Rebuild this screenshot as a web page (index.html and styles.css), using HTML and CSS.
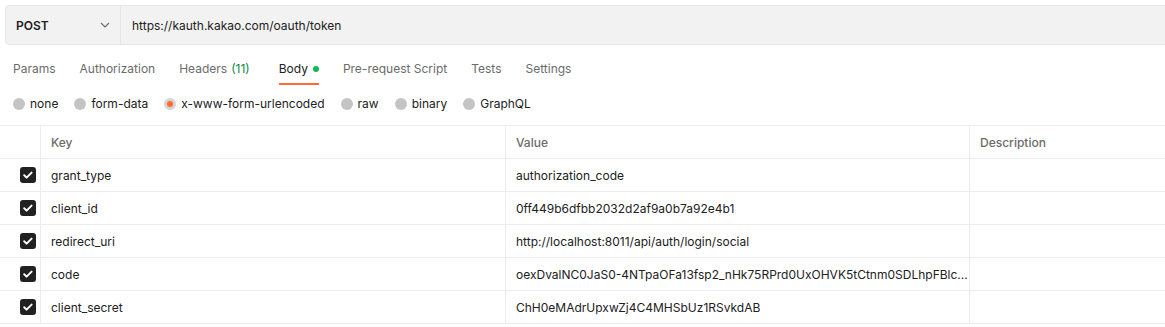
FILE: index.html
```html
<!DOCTYPE html>
<html lang="en">
<head>
    <meta charset="UTF-8">
    <title>POST https://kauth.kakao.com/oauth/token</title>
    <link rel="stylesheet" href="styles.css">
</head>
<body>
    <div class="url-bar">
        <div class="method">
            <span>POST</span>
            <svg class="chevron" width="10" height="6" viewBox="0 0 10 6"><path d="M1 1l4 4 4-4" fill="none" stroke="#6b6b6b" stroke-width="1.1"/></svg>
        </div>
        <div class="url">https://kauth.kakao.com/oauth/token</div>
    </div>

    <div class="tabs">
        <div class="tab">Params</div>
        <div class="tab">Authorization</div>
        <div class="tab headers">Headers <span class="count">(11)</span></div>
        <div class="tab active">Body <span class="dot"></span></div>
        <div class="tab">Pre-request Script</div>
        <div class="tab">Tests</div>
        <div class="tab">Settings</div>
    </div>

    <div class="body-types">
        <label class="radio"><span class="circle"></span>none</label>
        <label class="radio"><span class="circle"></span>form-data</label>
        <label class="radio"><span class="circle selected"></span>x-www-form-urlencoded</label>
        <label class="radio"><span class="circle"></span>raw</label>
        <label class="radio"><span class="circle"></span>binary</label>
        <label class="radio"><span class="circle"></span>GraphQL</label>
    </div>

    <div class="params">
        <div class="row head">
            <div class="cell check"></div>
            <div class="cell">Key</div>
            <div class="cell">Value</div>
            <div class="cell">Description</div>
        </div>
        <div class="row">
            <div class="cell check"><span class="box"></span></div>
            <div class="cell">grant_type</div>
            <div class="cell">authorization_code</div>
            <div class="cell"></div>
        </div>
        <div class="row">
            <div class="cell check"><span class="box"></span></div>
            <div class="cell">client_id</div>
            <div class="cell">0ff449b6dfbb2032d2af9a0b7a92e4b1</div>
            <div class="cell"></div>
        </div>
        <div class="row">
            <div class="cell check"><span class="box"></span></div>
            <div class="cell">redirect_uri</div>
            <div class="cell">http://localhost:8011/api/auth/login/social</div>
            <div class="cell"></div>
        </div>
        <div class="row">
            <div class="cell check"><span class="box"></span></div>
            <div class="cell">code</div>
            <div class="cell">oexDvalNC0JaS0-4NTpaOFa13fsp2_nHk75RPrd0UxOHVK5tCtnm0SDLhpFBlc...</div>
            <div class="cell"></div>
        </div>
        <div class="row">
            <div class="cell check"><span class="box"></span></div>
            <div class="cell">client_secret</div>
            <div class="cell">ChH0eMAdrUpxwZj4C4MHSbUz1RSvkdAB</div>
            <div class="cell"></div>
        </div>
    </div>
</body>
</html>
```

FILE: styles.css
```css
body {
    margin: 0;
    font-family: Inter, "Noto Sans", sans-serif;
    font-size: 12px;
    color: #212121;
    background: #ffffff;
    overflow: hidden;
}

.url-bar {
    display: flex;
    height: 38px;
    margin: 5px -10px 0 5px;
    background-color: #f2f2f2;
    border: 1px solid #e6e6e6;
    border-radius: 4px;
}

.method {
    display: flex;
    align-items: center;
    justify-content: space-between;
    width: 115px;
    padding: 0 10px 0 10px;
    box-sizing: border-box;
    border-right: 1px solid #e6e6e6;
    font-weight: 600;
    font-size: 12px;
}

.url {
    display: flex;
    align-items: center;
    padding-left: 11px;
    font-size: 12px;
}

.tabs {
    display: flex;
    gap: 24px;
    padding: 0 13px;
    margin-top: 9px;
    height: 31px;
}

.tab {
    display: flex;
    align-items: center;
    height: 29px;
    font-size: 12px;
    color: #6b6b6b;
    border-bottom: 2px solid transparent;
}

.tab.headers {
    margin-right: 5px;
}

.tab.active {
    color: #212121;
    border-bottom-color: #ff6c37;
}

.count {
    color: #0a8a3f;
    margin-left: 4px;
}

.dot {
    width: 6px;
    height: 6px;
    border-radius: 50%;
    background-color: #0cbb52;
    margin-left: 5px;
}

.body-types {
    display: flex;
    gap: 16px;
    padding: 0 13px 3px;
    height: 37px;
    align-items: center;
}

.radio {
    display: flex;
    align-items: center;
    gap: 5px;
    font-size: 12px;
    color: #212121;
}

.circle {
    width: 12px;
    height: 12px;
    border-radius: 50%;
    background-color: #c4c4c4;
    box-sizing: border-box;
}

.circle.selected {
    background-color: #ff6c37;
    border: 3px solid #d4d4d4;
}

.params {
    border-top: 1px solid #ededed;
}

.row {
    display: grid;
    grid-template-columns: 41px 465px 464px 1fr;
    height: 33px;
    border-bottom: 1px solid #ededed;
    box-sizing: border-box;
}

.cell {
    display: flex;
    align-items: center;
    padding-left: 10px;
    border-right: 1px solid #ededed;
    white-space: nowrap;
    overflow: hidden;
}

.cell:last-child {
    border-right: none;
}

.row.head .cell {
    color: #6b6b6b;
    font-weight: 500;
}

.cell.check {
    padding-left: 0;
    justify-content: flex-end;
    padding-right: 4px;
}

.box {
    width: 16px;
    height: 16px;
    border-radius: 3px;
    background-color: #212121;
    background-image: url("data:image/svg+xml,%3Csvg xmlns='http://www.w3.org/2000/svg' width='16' height='16' viewBox='0 0 16 16'%3E%3Cpath d='M4.2 8.3l2.4 2.3 5-5' fill='none' stroke='white' stroke-width='2' stroke-linecap='round' stroke-linejoin='round'/%3E%3C/svg%3E");
}
```
